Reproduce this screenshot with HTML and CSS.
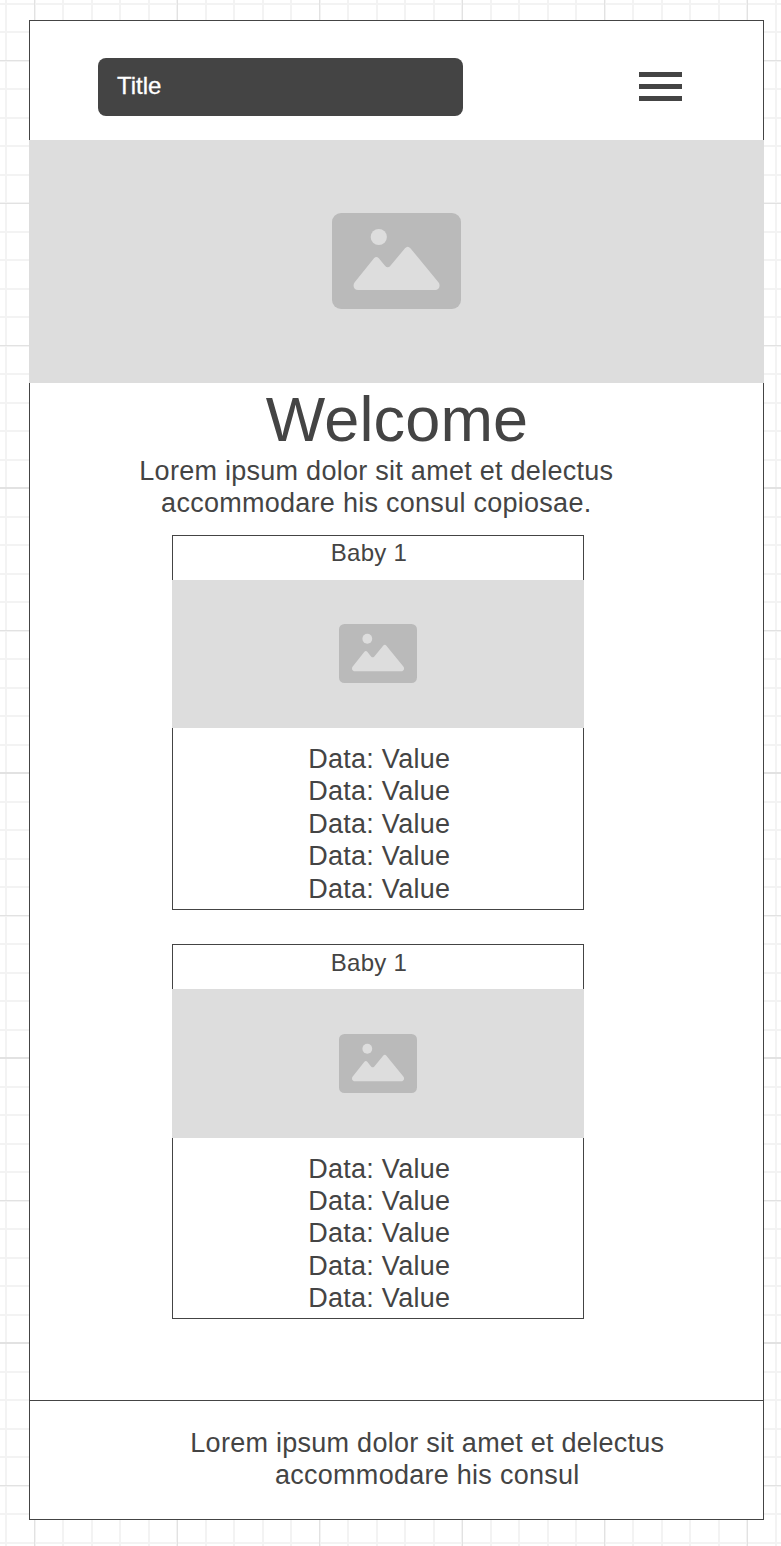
FILE: index.html
```html
<!DOCTYPE html>
<html lang="en">
<head>
<meta charset="utf-8">
<title>Title</title>
<link rel="stylesheet" href="styles.css">
</head>
<body>
<svg class="defs" width="0" height="0" aria-hidden="true">
  <symbol id="picture" viewBox="0 0 129 96" preserveAspectRatio="none">
    <rect width="129" height="96" rx="9" fill="#bababa"/>
    <circle cx="46.8" cy="24" r="8.1" fill="#ddd"/>
    <path fill="#ddd" d="M26 77C22 77 20.2 72.4 22.7 69.2L42 45.3Q44.4 42.6 46.8 45.3L53 52.8Q55.7 55.8 58.4 52.8L73 35.2Q75.7 32.2 78.4 35.2L106.4 69.2C109 72.4 107 77 103.2 77Z"/>
  </symbol>
</svg>
<div class="page">
  <header class="header">
    <div class="title">Title</div>
    <svg class="menu" viewBox="0 0 43 29"><path fill="#444" d="M0 .1h43v4.8H0zM0 12.1h43v4.8H0zM0 24.1h43v4.8H0z"/></svg>
  </header>
  <div class="hero"><svg class="hero-icon"><use href="#picture"/></svg></div>
  <main class="main">
    <h1 class="welcome">Welcome</h1>
    <p class="intro">Lorem ipsum dolor sit amet et delectus<br>accommodare his consul copiosae.</p>
    <section class="card card-first">
      <h2 class="card-name">Baby 1</h2>
      <div class="card-image"><svg class="card-icon"><use href="#picture"/></svg></div>
      <ul class="data">
        <li>Data: Value</li><li>Data: Value</li><li>Data: Value</li><li>Data: Value</li><li>Data: Value</li>
      </ul>
    </section>
    <section class="card card-second">
      <h2 class="card-name">Baby 1</h2>
      <div class="card-image"><svg class="card-icon"><use href="#picture"/></svg></div>
      <ul class="data">
        <li>Data: Value</li><li>Data: Value</li><li>Data: Value</li><li>Data: Value</li><li>Data: Value</li>
      </ul>
    </section>
  </main>
  <footer class="footer">
    <p class="footer-text">Lorem ipsum dolor sit amet et delectus<br>accommodare his consul</p>
  </footer>
</div>
</body>
</html>
```
FILE: styles.css
```css
* { box-sizing: border-box; margin: 0; padding: 0; }

body {
  display: flow-root;
  height: 1546px;
  overflow: hidden;
  color: #444;
  font-family: "Liberation Sans", Arial, sans-serif;
  font-size: 27px;
  line-height: 32.4px;
  letter-spacing: 0.27px;
  background-color: #fff;
  background-image:
    repeating-linear-gradient(to right, #e2e2e2 0 1.3px, transparent 1.3px 142.5px),
    repeating-linear-gradient(to bottom, #e2e2e2 0 1.3px, transparent 1.3px 142.47px),
    repeating-linear-gradient(to right, #f3f3f3 0 1.9px, transparent 1.9px 28.5px),
    repeating-linear-gradient(to bottom, #f3f3f3 0 1.9px, transparent 1.9px 28.494px);
  background-size: 1000px 1800px;
  background-position: -108.4px 0, 0 -82.4px, -23.1px 0, 0 -25.5px;
}

.defs { display: block; }

.page {
  display: flex;
  flex-direction: column;
  width: 735px;
  height: 1500px;
  margin: 20px 0 0 29px;
  border: 1px solid #444;
  background: #fff;
}

.header {
  display: flex;
  justify-content: space-between;
  align-items: flex-start;
  height: 119px;
  padding: 37px 81px 0 68px;
}

.title {
  width: 365px;
  height: 58px;
  padding-left: 19px;
  border-radius: 8px;
  background: #444;
  color: #fff;
  font-size: 24px;
  line-height: 56px;
  letter-spacing: 0;
  -webkit-text-stroke: 0.3px #fff;
}

.menu { width: 43px; height: 29px; margin-top: 14px; }

.hero {
  display: flex;
  justify-content: center;
  align-items: center;
  height: 243px;
  margin: 0 -1px;
  background: #ddd;
}

.hero-icon { width: 129px; height: 96px; margin-bottom: 1px; }

.main { height: 1017px; }

.welcome {
  height: 72px;
  padding-left: 1px;
  font-size: 63px;
  font-weight: 400;
  line-height: 73px;
  letter-spacing: 0.15px;
  text-align: center;
}

.intro {
  width: 474px;
  height: 65px;
  margin-left: 109.3px;
  text-align: center;
  white-space: nowrap;
}

.card {
  width: 412px;
  height: 375px;
  margin: 15px 0 0 142px;
  border: 1px solid #444;
}

.card-second { margin-top: 34px; }

.card-name {
  height: 44px;
  padding-right: 18px;
  font-size: 24px;
  font-weight: 400;
  line-height: 35px;
  text-align: center;
}

.card-first .card-name { line-height: 33px; }

.card-image {
  display: flex;
  justify-content: center;
  align-items: center;
  height: 148px;
  margin: 0 -1px;
  background: #ddd;
}

.card-second .card-image { height: 149px; }

.card-icon { width: 78px; height: 59px; }

.card-first .card-icon { margin-bottom: 1px; }

.data { padding: 15px 0 0 2.5px; list-style: none; text-align: center; }

.card-second .data { padding-top: 14.6px; }

.footer {
  height: 119px;
  padding: 26px 0 0 160.3px;
  border-top: 1px solid #444;
}

.footer-text { width: 474px; text-align: center; white-space: nowrap; }
```
